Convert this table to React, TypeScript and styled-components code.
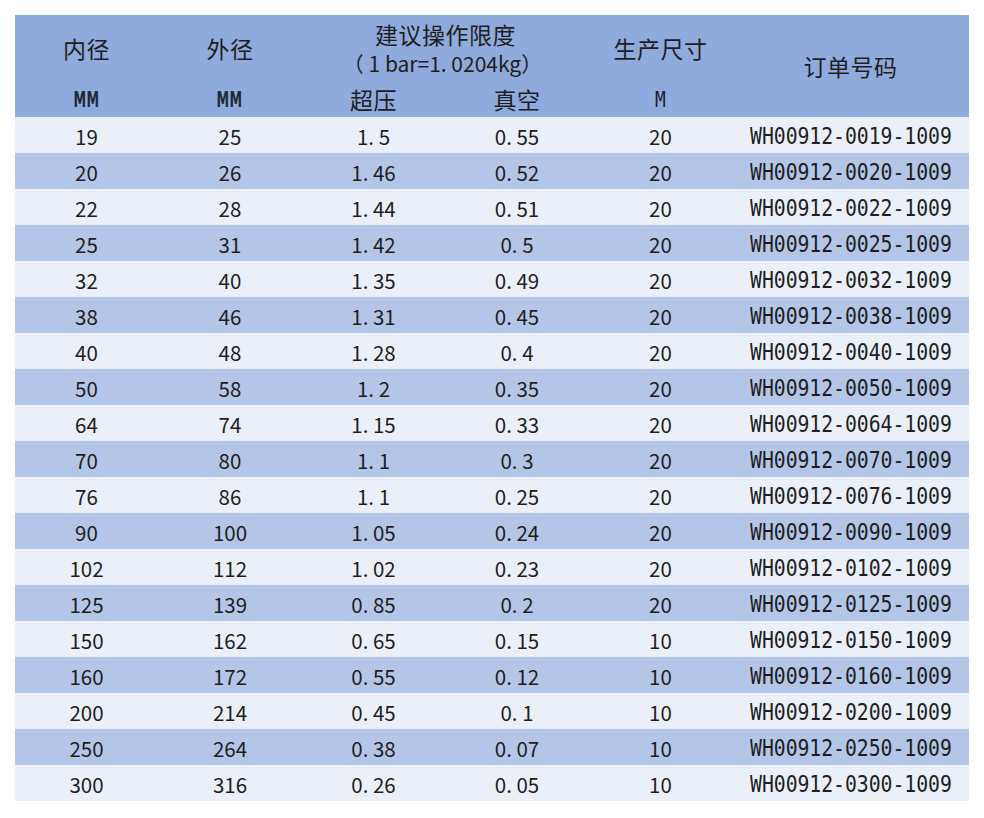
import React from "react";
import styled, { createGlobalStyle } from "styled-components";

const Global = createGlobalStyle`
  html, body { margin: 0; padding: 0; background: #ffffff; }
  body { font-family: "Noto Sans CJK SC", "Noto Sans", sans-serif; color: #1e1e1e; }
`;

const cols = "143px 144px 143px 144px 143px 1fr";

const Page = styled.div`
  padding: 15px 15px 0 15px;
  width: 954px;
`;

const Header = styled.div`
  display: grid;
  grid-template-columns: ${cols};
  grid-template-rows: 67px 35px;
  background: #8faadc;
`;

const HCell = styled.div<{ $col: string; $row: string }>`
  grid-column: ${(p) => p.$col};
  grid-row: ${(p) => p.$row};
  display: flex;
  flex-direction: column;
  align-items: center;
  justify-content: center;
  font-size: 23px;
  letter-spacing: 0.5px;
  line-height: 29px;
  color: #1e1e1e;
`;

const SubLine = styled.span`
  font-size: 21px;
  letter-spacing: 0;
  margin-left: -6px;
`;

const Unit = styled.span`
  display: inline-block;
  font-family: "DejaVu Sans Condensed", "Liberation Sans", sans-serif;
  font-weight: bold;
  font-size: 19px;
  color: #1f2a38;
  transform: scale(0.74, 1.08);
`;

const MonoText = styled.span<{ $size?: number }>`
  display: inline-block;
  font-family: "DejaVu Sans Mono", "Liberation Mono", monospace;
  font-size: ${(p) => p.$size ?? 20}px;
  letter-spacing: -0.05px;
  transform: scale(0.99, 1.17);
`;

const Row = styled.div<{ $alt: boolean }>`
  display: grid;
  grid-template-columns: ${cols};
  height: 36px;
  background: ${(p) => (p.$alt ? "#b4c6e7" : "#ebf0f8")};
`;

const Cell = styled.div`
  display: flex;
  align-items: center;
  justify-content: center;
  font-size: 20.5px;
  color: #1e1e1e;
  line-height: 36px;
  padding-top: 1px;
`;

const data: [string, string, string, string, string][] = [
  ["19", "25", "1. 5", "0. 55", "20"],
  ["20", "26", "1. 46", "0. 52", "20"],
  ["22", "28", "1. 44", "0. 51", "20"],
  ["25", "31", "1. 42", "0. 5", "20"],
  ["32", "40", "1. 35", "0. 49", "20"],
  ["38", "46", "1. 31", "0. 45", "20"],
  ["40", "48", "1. 28", "0. 4", "20"],
  ["50", "58", "1. 2", "0. 35", "20"],
  ["64", "74", "1. 15", "0. 33", "20"],
  ["70", "80", "1. 1", "0. 3", "20"],
  ["76", "86", "1. 1", "0. 25", "20"],
  ["90", "100", "1. 05", "0. 24", "20"],
  ["102", "112", "1. 02", "0. 23", "20"],
  ["125", "139", "0. 85", "0. 2", "20"],
  ["150", "162", "0. 65", "0. 15", "10"],
  ["160", "172", "0. 55", "0. 12", "10"],
  ["200", "214", "0. 45", "0. 1", "10"],
  ["250", "264", "0. 38", "0. 07", "10"],
  ["300", "316", "0. 26", "0. 05", "10"],
];

const code = (d: string) => `WH00912-${d.padStart(4, "0")}-1009`;

export default function App() {
  return (
    <>
      <Global />
      <Page>
        <Header>
          <HCell $col="1" $row="1">内径</HCell>
          <HCell $col="2" $row="1">外径</HCell>
          <HCell $col="3 / span 2" $row="1">
            <span>建议操作限度</span>
            <SubLine>（ 1 bar=1. 0204kg）</SubLine>
          </HCell>
          <HCell $col="5" $row="1">生产尺寸</HCell>
          <HCell $col="6" $row="1 / span 2">订单号码</HCell>
          <HCell $col="1" $row="2"><Unit>MM</Unit></HCell>
          <HCell $col="2" $row="2"><Unit>MM</Unit></HCell>
          <HCell $col="3" $row="2">超压</HCell>
          <HCell $col="4" $row="2">真空</HCell>
          <HCell $col="5" $row="2"><MonoText $size={18}>M</MonoText></HCell>
        </Header>
        {data.map((r, i) => (
          <Row key={r[0]} $alt={i % 2 === 1}>
            <Cell>{r[0]}</Cell>
            <Cell>{r[1]}</Cell>
            <Cell>{r[2]}</Cell>
            <Cell>{r[3]}</Cell>
            <Cell>{r[4]}</Cell>
            <Cell><MonoText>{code(r[0])}</MonoText></Cell>
          </Row>
        ))}
      </Page>
    </>
  );
}
